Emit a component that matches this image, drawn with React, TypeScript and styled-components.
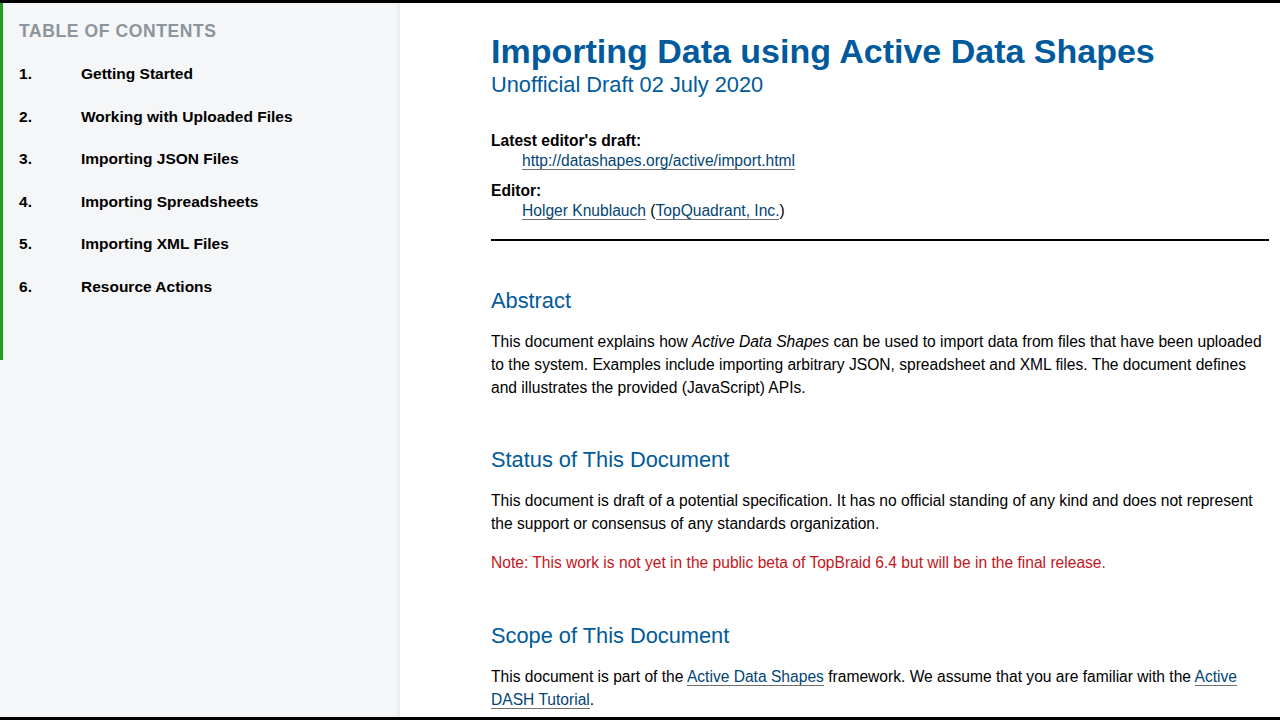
import React from "react";
import styled, { createGlobalStyle } from "styled-components";

const Global = createGlobalStyle`
  html, body { margin: 0; padding: 0; background: #000; }
  body { font-family: "Liberation Sans", Arial, sans-serif; }
`;

const Frame = styled.div`
  width: 1280px; height: 720px; box-sizing: border-box;
  border-top: 3px solid #000; border-bottom: 3px solid #000;
  background: #fff; display: flex; overflow: hidden;
`;
const Side = styled.nav`
  width: 400px; flex: none; background: #f5f6f7; position: relative;
  box-shadow: inset -3px 0 4px -2px rgba(0,0,0,0.08);
  &::before { content: ""; position: absolute; left: 0; top: 0; width: 3px; height: 357px; background: #1f9e1f; }
`;
const TocTitle = styled.h2`
  margin: 18px 0 0 19px; font-size: 17.5px; font-weight: bold; color: #8c949c; letter-spacing: 0.6px;
`;
const TocList = styled.ol`
  list-style: none; margin: 23px 0 0 0; padding: 0;
`;
const TocItem = styled.li`
  display: flex; height: 42.5px; font-size: 15.5px; font-weight: bold; color: #000;
`;
const Num = styled.span` width: 62px; padding-left: 19px; `;
const Main = styled.main`
  flex: 1; padding: 29px 11px 0 91px; color: #000;
`;
const Title = styled.h1`
  margin: 0; font-size: 34px; line-height: 38px; color: #005a9c; font-weight: bold;
`;
const Sub = styled.div` font-size: 21.8px; color: #005a9c; line-height: 30px; `;
const Dl = styled.dl` margin: 31px 0 0; font-size: 15.6px; `;
const Dt = styled.dt` font-weight: bold; line-height: 19px; `;
const Dd = styled.dd` margin: 0 0 9px 31px; line-height: 22px; `;
const A = styled.a`
  color: #034575; text-decoration: none; border-bottom: 1px solid #707070;
`;
const Hr = styled.hr` border: none; border-top: 2px solid #000; margin: 17px 0 0; `;
const H2 = styled.h2<{ $top: number }>`
  font-size: 21.8px; font-weight: normal; color: #005a9c; margin: ${p => p.$top}px 0 0; line-height: 26px;
`;
const P = styled.p<{ $red?: boolean }>`
  font-size: 15.6px; line-height: 23px; margin: 16px 0 0; color: ${p => (p.$red ? "#c4161c" : "#000")};
`;

const toc = ["Getting Started", "Working with Uploaded Files", "Importing JSON Files", "Importing Spreadsheets", "Importing XML Files", "Resource Actions"];

export default function App() {
  return (
    <>
      <Global />
      <Frame>
        <Side>
          <TocTitle>TABLE OF CONTENTS</TocTitle>
          <TocList>
            {toc.map((t, i) => (
              <TocItem key={t}><Num>{i + 1}.</Num>{t}</TocItem>
            ))}
          </TocList>
        </Side>
        <Main>
          <Title>Importing Data using Active Data Shapes</Title>
          <Sub>Unofficial Draft 02 July 2020</Sub>
          <Dl>
            <Dt>Latest editor's draft:</Dt>
            <Dd><A href="#">http://datashapes.org/active/import.html</A></Dd>
            <Dt>Editor:</Dt>
            <Dd><A href="#">Holger Knublauch</A> (<A href="#">TopQuadrant, Inc.</A>)</Dd>
          </Dl>
          <Hr />
          <H2 $top={47}>Abstract</H2>
          <P>This document explains how <i>Active Data Shapes</i> can be used to import data from files that have been uploaded to the system. Examples include importing arbitrary JSON, spreadsheet and XML files. The document defines and illustrates the provided (JavaScript) APIs.</P>
          <H2 $top={48}>Status of This Document</H2>
          <P>This document is draft of a potential specification. It has no official standing of any kind and does not represent the support or consensus of any standards organization.</P>
          <P $red>Note: This work is not yet in the public beta of TopBraid 6.4 but will be in the final release.</P>
          <H2 $top={49}>Scope of This Document</H2>
          <P>This document is part of the <A href="#">Active Data Shapes</A> framework. We assume that you are familiar with the <A href="#">Active DASH Tutorial</A>.</P>
        </Main>
      </Frame>
    </>
  );
}
